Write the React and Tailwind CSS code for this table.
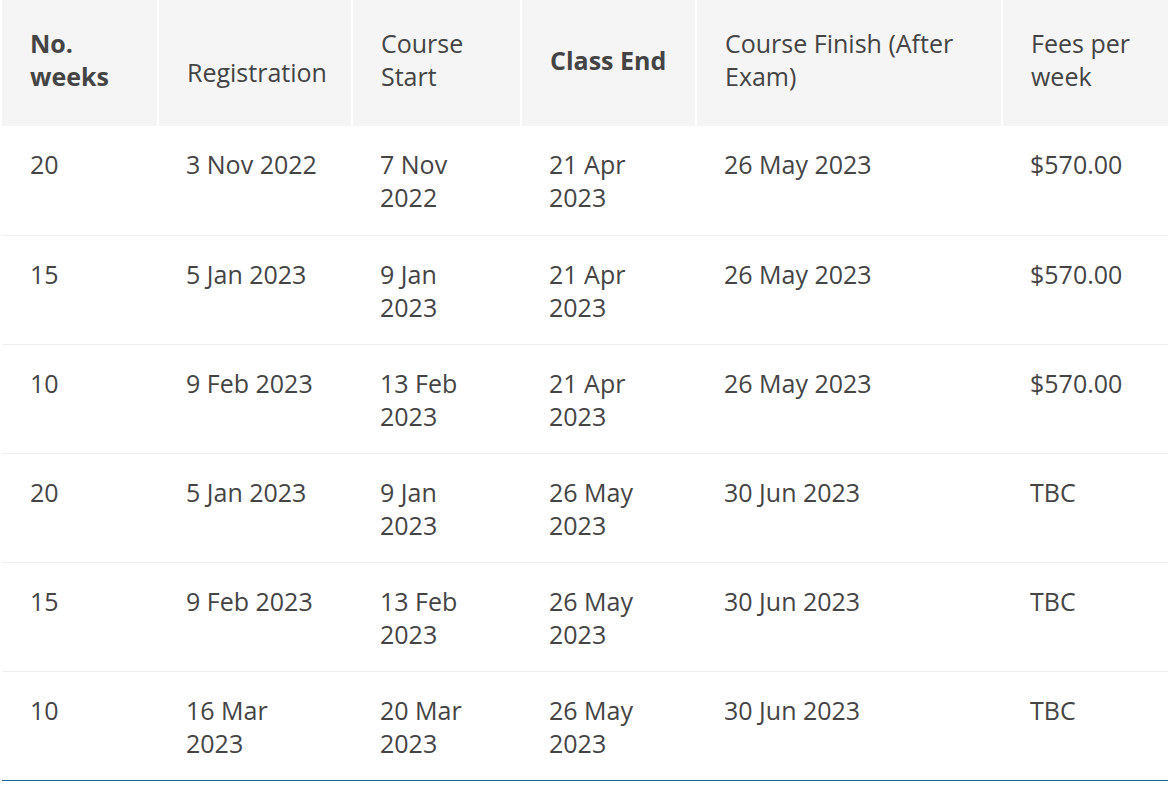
import React from "react";

const rows = [
  ["20", "3 Nov 2022", "7 Nov 2022", "21 Apr 2023", "26 May 2023", "$570.00"],
  ["15", "5 Jan 2023", "9 Jan 2023", "21 Apr 2023", "26 May 2023", "$570.00"],
  ["10", "9 Feb 2023", "13 Feb 2023", "21 Apr 2023", "26 May 2023", "$570.00"],
  ["20", "5 Jan 2023", "9 Jan 2023", "26 May 2023", "30 Jun 2023", "TBC"],
  ["15", "9 Feb 2023", "13 Feb 2023", "26 May 2023", "30 Jun 2023", "TBC"],
  ["10", "16 Mar 2023", "20 Mar 2023", "26 May 2023", "30 Jun 2023", "TBC"],
];

const widths = ["w-[156px]", "w-[194px]", "w-[169px]", "w-[175px]", "w-[306px]", "w-[166px]"];

const App = () => {
  return (
    <div className="bg-white min-h-screen pl-[2px] font-['Open_Sans',sans-serif] text-[#444]">
      <table className="table-fixed w-[1166px] border-collapse text-[25px] leading-[33px]">
        <colgroup>
          {widths.map((w, i) => (
            <col key={i} className={w} />
          ))}
        </colgroup>
        <thead className="bg-[#f5f5f5]">
          <tr className="h-[126px]">
            <th className="px-[28px] pb-[6px] text-left align-middle font-bold border-r-2 border-white">
              No. weeks
            </th>
            <th className="px-[28px] pt-[24px] pb-[6px] text-left align-middle font-normal border-r-2 border-white">
              Registration
            </th>
            <th className="px-[28px] pb-[6px] text-left align-middle font-normal border-r-2 border-white">
              Course Start
            </th>
            <th className="px-[28px] pb-[6px] text-left align-middle font-bold border-r-2 border-white">
              Class End
            </th>
            <th className="px-[28px] pb-[6px] text-left align-middle font-normal border-r-2 border-white">
              Course Finish (After Exam)
            </th>
            <th className="px-[28px] pb-[6px] text-left align-middle font-normal">
              Fees per week
            </th>
          </tr>
        </thead>
        <tbody>
          {rows.map((r, i) => (
            <tr
              key={i}
              className={`h-[109px] ${
                i === rows.length - 1 ? "border-b border-[#1a6496]" : "border-b border-[#eeeeee]"
              }`}
            >
              {r.map((c, j) => (
                <td key={j} className="px-[28px] pt-[22px] pb-[20px] align-top">
                  {c}
                </td>
              ))}
            </tr>
          ))}
        </tbody>
      </table>
    </div>
  );
};

export default App;
